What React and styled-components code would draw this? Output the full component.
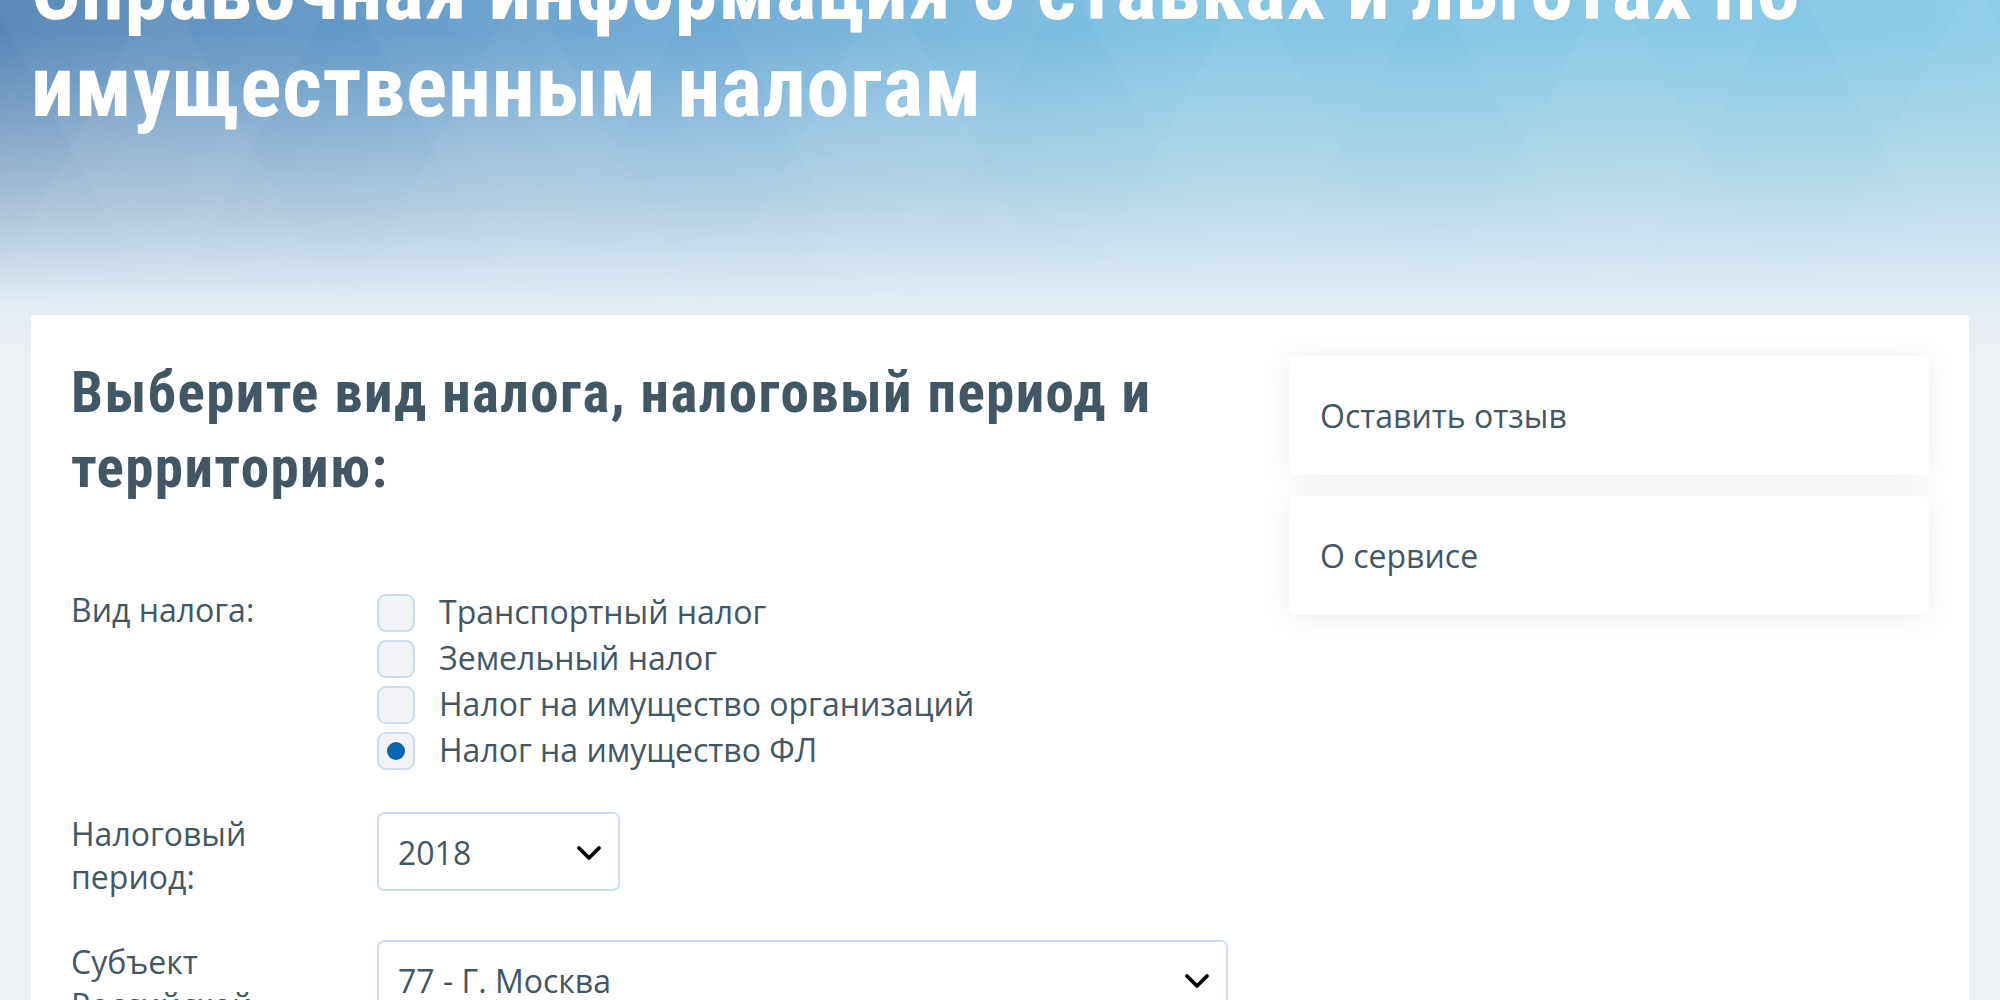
import React from "react";
import styled, { createGlobalStyle } from "styled-components";

const GlobalStyle = createGlobalStyle`
    html, body {
        margin: 0;
        padding: 0;
        background: #eef1f6;
    }
    body {
        font-family: "Open Sans", "Noto Sans", sans-serif;
        color: #425764;
        overflow: hidden;
    }
`;

const Page = styled.div`
    min-height: 100vh;
    padding: 0 31px;
    background-color: #eef1f6;
    background-image:
        linear-gradient(180deg, rgba(238,241,246,0) 0%, rgba(238,241,246,0) 22%, rgba(226,236,243,0.55) 62%, #e3ecf3 88%, #eef1f6 100%),
        repeating-linear-gradient(118deg, rgba(255,255,255,0) 0 160px, rgba(255,255,255,0.035) 160px 320px),
        repeating-linear-gradient(62deg, rgba(255,255,255,0) 0 160px, rgba(255,255,255,0.035) 160px 320px),
        linear-gradient(100deg, #5785b5 0%, #6ea8d3 32%, #80c2e2 58%, #8acae6 100%);
    background-size: 100% 415px;
    background-repeat: no-repeat;
`;

const Title = styled.h1`
    margin: -59px 0 180px;
    font-family: "Liberation Sans Narrow", "Roboto", sans-serif;
    font-stretch: condensed;
    font-weight: 700;
    font-size: 86px;
    line-height: 97px;
    letter-spacing: 0.8px;
    color: #fff;
`;

const Card = styled.div`
    display: grid;
    grid-template-columns: 1157px 640px;
    column-gap: 61px;
    align-items: start;
    padding: 40px;
    background: #fff;
    border-radius: 4px;
`;

const Main = styled.div`
    display: flex;
    flex-direction: column;
`;

const Heading = styled.h2`
    margin: 0 0 83px;
    font-family: "Liberation Sans Narrow", "Roboto", sans-serif;
    font-stretch: condensed;
    font-weight: 700;
    font-size: 57px;
    line-height: 75px;
    letter-spacing: 1.4px;
    color: #425764;
`;

const Form = styled.div`
    display: flex;
    flex-direction: column;
`;

const Row = styled.div`
    display: grid;
    grid-template-columns: 306px 1fr;
    align-items: start;
    margin-bottom: ${p => p.$space || 42}px;
`;

const Label = styled.div`
    font-size: 32px;
    line-height: 43px;
    width: 210px;
`;

const Options = styled.div`
    display: flex;
    flex-direction: column;
`;

const Option = styled.label`
    display: flex;
    align-items: center;
    gap: 24px;
    height: 46px;
    font-size: 32px;
    line-height: 43px;
`;

const Radio = styled.span`
    display: flex;
    align-items: center;
    justify-content: center;
    flex: none;
    box-sizing: border-box;
    width: 38px;
    height: 38px;
    margin-top: 3px;
    border: 2px solid #cadcef;
    border-radius: 9px;
    background: #f1f3f6;

    &::after {
        content: "";
        display: ${p => (p.$checked ? "block" : "none")};
        width: 18px;
        height: 18px;
        border-radius: 50%;
        background: #0a64b0;
    }
`;

const Select = styled.div`
    display: flex;
    align-items: center;
    justify-content: space-between;
    box-sizing: border-box;
    width: ${p => p.$width || "100%"};
    height: 79px;
    padding: 2px 16px 0 19px;
    border: 2px solid #cddcee;
    border-radius: 7px;
    background: #fff;
    font-size: 32px;
    color: #425764;
`;

const Side = styled.div`
    display: flex;
    flex-direction: column;
    gap: 21px;
    margin-top: 1px;
`;

const SideLink = styled.a`
    display: block;
    box-sizing: border-box;
    height: 119px;
    padding: 38px 31px;
    background: #fff;
    border-radius: 5px;
    box-shadow: 0 2px 30px rgba(0, 0, 0, 0.07);
    font-size: 32px;
    line-height: 43px;
    color: #425764;
    text-decoration: none;
`;

const Chevron = () => (
    <svg width="26" height="16" viewBox="0 0 26 16" fill="none">
        <polyline points="3,3 13,13 23,3" stroke="#000" strokeWidth="3.8" strokeLinecap="round" strokeLinejoin="round" />
    </svg>
);

const taxes = [
    { name: "Транспортный налог", checked: false },
    { name: "Земельный налог", checked: false },
    { name: "Налог на имущество организаций", checked: false },
    { name: "Налог на имущество ФЛ", checked: true },
];

function App() {
    return (
        <>
            <GlobalStyle />
            <Page>
                <Title>
                    Справочная информация о ставках и льготах по
                    <br />
                    имущественным налогам
                </Title>
                <Card>
                    <Main>
                        <Heading>
                            Выберите вид налога, налоговый период и
                            <br />
                            территорию:
                        </Heading>
                        <Form>
                            <Row $space={40}>
                                <Label>Вид налога:</Label>
                                <Options>
                                    {taxes.map(t => (
                                        <Option key={t.name}>
                                            <Radio $checked={t.checked} />
                                            {t.name}
                                        </Option>
                                    ))}
                                </Options>
                            </Row>
                            <Row $space={42}>
                                <Label>Налоговый период:</Label>
                                <Select $width="243px">
                                    2018
                                    <Chevron />
                                </Select>
                            </Row>
                            <Row>
                                <Label>Субъект Российской Федерации:</Label>
                                <Select>
                                    77 - Г. Москва
                                    <Chevron />
                                </Select>
                            </Row>
                        </Form>
                    </Main>
                    <Side>
                        <SideLink href="#">Оставить отзыв</SideLink>
                        <SideLink href="#">О сервисе</SideLink>
                    </Side>
                </Card>
            </Page>
        </>
    );
}

export default App;
